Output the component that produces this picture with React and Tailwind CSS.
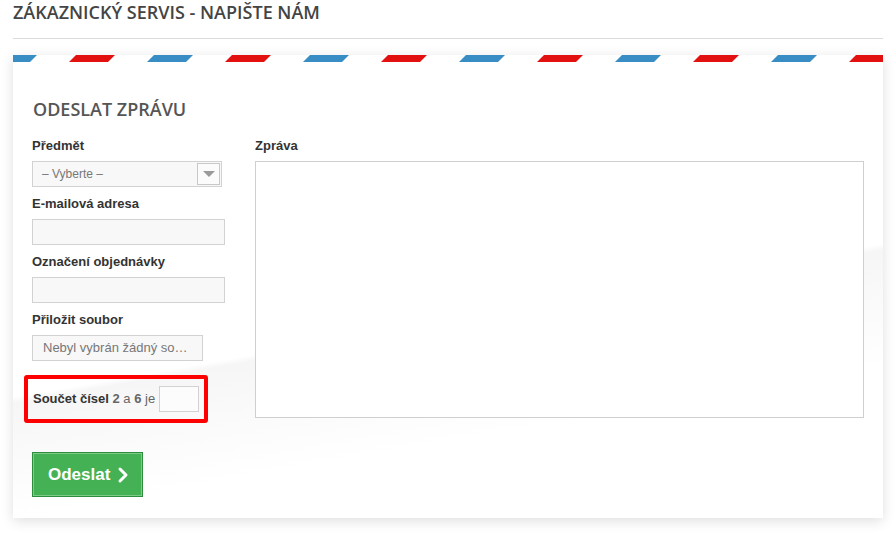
import { ChevronRight } from "lucide-react";

const label = "block text-[13px] leading-[18px] font-bold text-[#333] mb-[6px]";
const input = "block h-[26px] bg-[#f8f8f8] border border-[#d2d2d2]";

function AirmailStripes() {
    return (
        <svg className="block w-full h-[7px]" height="7">
            <defs>
                <pattern id="airmail" width="156" height="7" patternUnits="userSpaceOnUse" x="-22">
                    <polygon points="0,7 7,0 46,0 39,7" fill="#378dc4" />
                    <polygon points="78,7 85,0 124,0 117,7" fill="#e31010" />
                </pattern>
            </defs>
            <rect width="100%" height="7" fill="url(#airmail)" />
        </svg>
    );
}

export default function App() {
    return (
        <div className="w-[896px] h-[536px] bg-white overflow-hidden font-['Liberation_Sans',Arial,sans-serif]">
            <div className="pl-[13px] pr-[13px]">
                <h1 className="font-['Open_Sans',sans-serif] font-semibold text-[18px] leading-[24px] text-[#444] uppercase">
                    Zákaznický servis - napište nám
                </h1>
                <div className="mt-[14px] h-px bg-[#dcdcdc]" />

                {/* Card */}
                <div className="mt-[16px] bg-white shadow-[0_3px_12px_rgba(0,0,0,0.13)]">
                    <AirmailStripes />
                    <div className="px-[19px] pt-[35px] pb-[21px] bg-[linear-gradient(170deg,#fff_0%,#fff_55%,#f6f6f6_56%,#fff_75%)]">
                        <h2 className="font-['Open_Sans',sans-serif] font-semibold text-[18px] leading-[24px] text-[#555] uppercase ml-px">
                            Odeslat zprávu
                        </h2>

                        <div className="mt-[16px] flex gap-[30px]">
                            {/* Left column */}
                            <div className="w-[193px] shrink-0">
                                <label className={label}>Předmět</label>
                                <div className={`${input} w-[190px] relative flex items-center`}>
                                    <span className="pl-[9px] text-[12px] text-[#777]">– Vyberte –</span>
                                    <div className="absolute right-px top-px w-[23px] h-[22px] bg-[#fbfbfb] border border-[#c8c8c8] flex items-center justify-center">
                                        <div className="w-0 h-0 border-l-[6px] border-r-[6px] border-t-[6px] border-l-transparent border-r-transparent border-t-[#9a9a9a]" />
                                    </div>
                                </div>

                                <label className={`${label} mt-[8px]`}>E-mailová adresa</label>
                                <div className={`${input} w-[193px]`} />

                                <label className={`${label} mt-[8px]`}>Označení objednávky</label>
                                <div className={`${input} w-[193px]`} />

                                <label className={`${label} mt-[8px]`}>Přiložit soubor</label>
                                <div className={`${input} w-[171px] flex items-center pl-[10px] text-[13px] text-[#777]`}>
                                    Nebyl vybrán žádný so…
                                </div>

                                <div className="mt-[14px] -ml-[8px] w-[184px] h-[48px] border-4 border-[#ff0000] rounded-[3px] flex items-center pl-[5px]">
                                    <span className="text-[13px] text-[#666]">
                                        <b className="text-[#333]">Součet čísel</b> <b>2</b> a <b>6</b> je
                                    </span>
                                    <div className="ml-[4px] w-[40px] h-[26px] bg-[#fcfcfc] border border-[#d2d2d2]" />
                                </div>

                                <button className="mt-[29px] w-[111px] h-[45px] bg-[#44b155] border border-[#2e8d3d] shadow-[inset_0_0_0_1px_#7ccb87] flex items-center gap-px pl-[15px] text-white font-bold text-[17px]">
                                    Odeslat
                                    <ChevronRight size={24} strokeWidth={3} />
                                </button>
                            </div>

                            {/* Right column */}
                            <div className="flex-1">
                                <label className={label}>Zpráva</label>
                                <div className="h-[257px] bg-white border border-[#cfcfcf]" />
                            </div>
                        </div>
                    </div>
                </div>
            </div>
        </div>
    );
}
